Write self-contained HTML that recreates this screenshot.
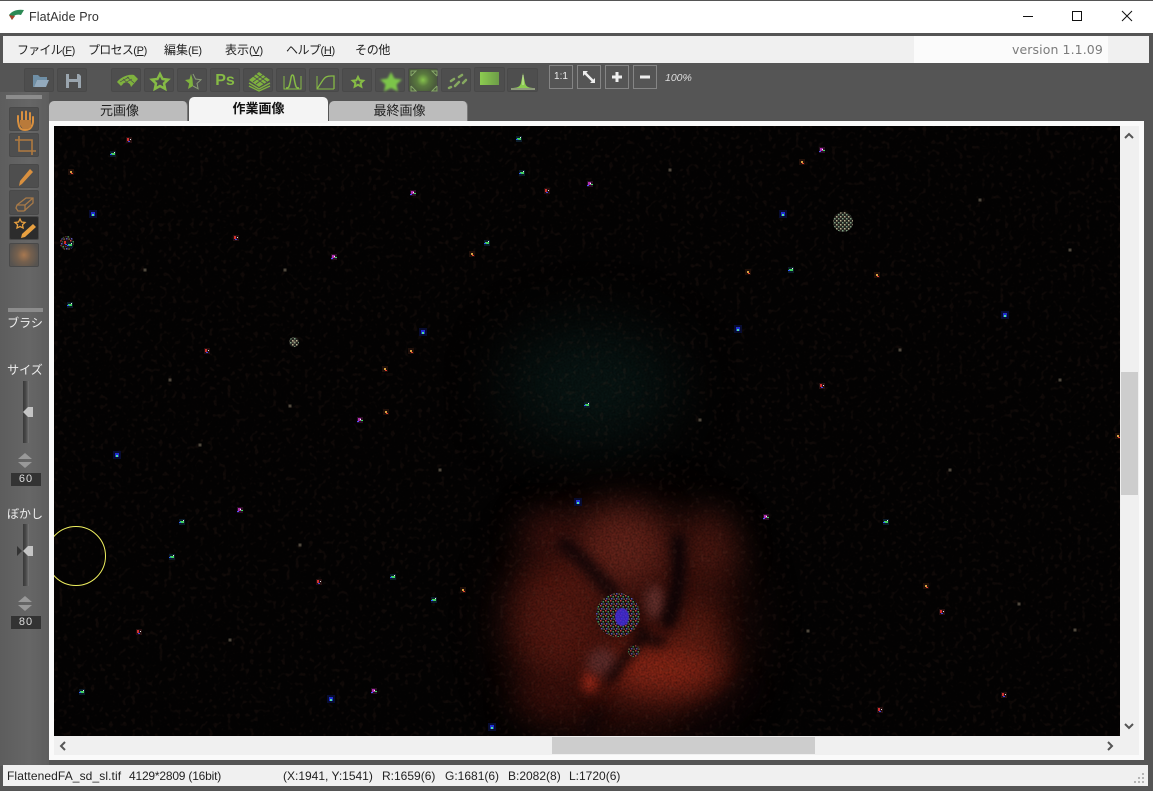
<!DOCTYPE html>
<html><head><meta charset="utf-8"><title>FlatAide Pro</title>
<style>
html,body{margin:0;padding:0;background:#555;}
body{width:1153px;height:791px;position:relative;overflow:hidden;font-family:"Liberation Sans","Noto Sans CJK JP",sans-serif;font-size:12px;color:#222}
.a{position:absolute;white-space:nowrap}
.b{position:absolute;width:30px;height:24px;background:#4e4e4e;border:1px solid #494949;box-sizing:border-box;border-radius:2px}
.b svg,.c svg{position:absolute;left:0;top:0}
.c{position:absolute;top:65px;width:24px;height:24px;border:1px solid #858585;box-sizing:border-box;color:#eee;font-size:10px;text-align:center;line-height:22px}
.m{position:absolute;top:42px;font-size:12px;line-height:16px;color:#222;white-space:nowrap}
.m span{font-size:11px;letter-spacing:-.3px}
.tab{position:absolute;box-sizing:border-box;text-align:center;font-size:13px;border-radius:5px 5px 0 0}
.v{position:absolute;left:11px;width:30px;height:13px;background:#333;color:#ddd;text-align:center;font:11px/13px "Liberation Sans",sans-serif;letter-spacing:1px}
.l{position:absolute;left:0;width:50px;text-align:center;color:#eee;font-size:12px;line-height:14px}
.tr{position:absolute;left:23px;width:6px;background:linear-gradient(90deg,#383838,#4a4a4a 50%,#777);}
.s{position:absolute;left:9px;width:30px;height:30px}
.st{position:absolute;top:769px;font-size:12px;line-height:15px;color:#222;white-space:nowrap}
</style></head><body>
<div class="a" style="left:0;top:0;width:1153px;height:33px;background:#fff;border-top:1px solid #555;box-sizing:border-box"></div>
<svg class="a" style="left:8px;top:8px" width="18" height="14" viewBox="0 0 18 14"><path d="M1 7 C4 3 9 1 16 2 L13 7 C9 6 5 7 4 12 Z" fill="#2c8a55"/><path d="M1 7 L4 12 L7 8 Z" fill="#a5432c"/></svg>
<div class="a" style="left:29px;top:10px;font-size:12.5px;line-height:15px;color:#333;letter-spacing:.1px">FlatAide Pro</div>
<svg class="a" style="left:1020px;top:8px" width="125" height="17" viewBox="0 0 125 17" fill="none" stroke="#111" stroke-width="1"><path d="M3 8.5H13"/><rect x="52.5" y="3.5" width="9" height="9"/><path d="M102 3L112 13M112 3L102 13"/></svg>

<div class="a" style="left:3px;top:36px;width:1146px;height:27px;background:#f0f0f0"></div>
<div class="a" style="left:914px;top:36px;width:194px;height:27px;background:#fbfbfb"></div>
<div class="m" style="left:17px;letter-spacing:-.8px">ファイル<span>(<u>F</u>)</span></div>
<div class="m" style="left:88px;letter-spacing:-.7px">プロセス<span>(<u>P</u>)</span></div>
<div class="m" style="left:164px">編集<span>(E)</span></div>
<div class="m" style="left:225px">表示<span>(<u>V</u>)</span></div>
<div class="m" style="left:286px;letter-spacing:-.5px">ヘルプ<span>(<u>H</u>)</span></div>
<div class="m" style="left:355px;letter-spacing:-.3px">その他</div>
<div class="a" style="left:1012px;top:42px;font:12.5px/16px 'DejaVu Sans',sans-serif;color:#7b7b7b;letter-spacing:.1px">version 1.1.09</div>

<!-- left column -->
<div class="a" style="left:0;top:92px;width:49px;height:674px;background:linear-gradient(90deg,#5d5d5d,#666 60%,#5e5e5e)"></div>
<div class="a" style="left:6px;top:95px;width:36px;height:4px;background:#8c8c8c"></div>
<div class="a" style="left:8px;top:308px;width:35px;height:4px;background:#8c8c8c"></div>

<!-- toolbar -->
<div class="b" style="left:24px;top:68px"><svg width="30" height="24" viewBox="0 0 30 24"><path d="M8 18V6h5l2 2h7v3H12l-3 7z" fill="#6f8fa6"/><path d="M9 18l3-7h12l-3 7z" fill="#93aabd"/></svg></div>
<div class="b" style="left:57px;top:68px"><svg width="30" height="24" viewBox="0 0 30 24"><path d="M8 5h13l2 2v12H8z" fill="#9aa5ae"/><rect x="11" y="5" width="8" height="5" fill="#4e4e4e"/><rect x="11" y="13" width="9" height="6" fill="#4e4e4e"/></svg></div>
<div class="b" style="left:111px;top:68px"><svg width="30" height="24" viewBox="0 0 30 24"><path d="M5 13C9 8 16 5 22 6L26 10 19 18C18 13 13 12 9 17Z" fill="#7fb23e"/><path d="M11 10l7 6M15 8l7 6M8 13l9-5M11 15l9-5" stroke="#4e4e4e" stroke-width=".7"/></svg></div>
<div class="b" style="left:144px;top:68px"><svg width="30" height="24" viewBox="0 0 30 24"><path d="M15 5l2.500 5 5.500.7-4 3.700 1.100 5.400-5.100-2.800-5.100 2.800 1.100-5.400-4-3.700 5.500-.7z" fill="none" stroke="#86bb45" stroke-width="2.500"/></svg></div>
<div class="b" style="left:177px;top:68px"><svg width="30" height="24" viewBox="0 0 30 24"><path d="M13 5l1.500 5 .5 7-5 3 1.200-5.500L7 11l4.500-.8z" fill="#7fb23e"/><path d="M15 5l2.500 5 5.500.7-4 3.700 1.100 5.400-5.100-2.800" fill="none" stroke="#8a9a78" stroke-width="1"/></svg></div>
<div class="b" style="left:210px;top:68px"><div class="a" style="left:0;width:28px;text-align:center;top:2px;font:bold 16px/20px 'Liberation Sans',sans-serif;color:#86bb45">Ps</div></div>
<div class="b" style="left:243px;top:68px"><svg width="30" height="24" viewBox="0 0 30 24"><path d="M5 11L15 3l11 8-11 7z" fill="#7fb23e"/><path d="M5 14l10 6 11-6M5 17l10 5 11-5" fill="none" stroke="#7fb23e" stroke-width="1.400"/><path d="M9 7l11 8M12 5l11 8M20 5L9 13M23 7L12 15" stroke="#4e4e4e" stroke-width=".8"/></svg></div>
<div class="b" style="left:276px;top:68px"><svg width="30" height="24" viewBox="0 0 30 24" fill="none" stroke="#86bb45"><path d="M7 7v13h17V7" stroke-width="1"/><path d="M9 19c3 0 3-1 4-5s1-8 2.500-8 1.500 4 2.500 8 1 5 4 5" stroke-width="1.500"/></svg></div>
<div class="b" style="left:309px;top:68px"><svg width="30" height="24" viewBox="0 0 30 24" fill="none" stroke="#86bb45"><path d="M7 7v13h17" stroke-width="1"/><path d="M7 20l6-9c2-3 4-4 8-4h3v13" stroke-width="1.300"/></svg></div>
<div class="b" style="left:342px;top:68px"><svg width="30" height="24" viewBox="0 0 30 24"><path d="M15 8l1.600 3.300 3.600.4-2.600 2.400.7 3.500-3.300-1.800-3.300 1.800.7-3.500-2.600-2.400 3.600-.4z" fill="none" stroke="#86bb45" stroke-width="2"/></svg></div>
<div class="b" style="left:375px;top:68px"><svg width="30" height="24" viewBox="0 0 30 24"><defs><filter id="f1"><feGaussianBlur stdDeviation="1"/></filter></defs><path d="M15 3l3.500 6.500 7.500 1-5.500 5 1.500 7-7-3.500-7 3.500 1.500-7L4 10.500l7.500-1z" fill="#7cc44a" filter="url(#f1)"/></svg></div>
<div class="b" style="left:408px;top:68px;background:radial-gradient(circle,#86c24c 0,#5a7a3e 35%,#4a5a3c 75%)"><svg width="30" height="24" viewBox="0 0 30 24" fill="none" stroke="#86a868" stroke-width="1"><path d="M2 7V2h5l-5 5M28 7V2h-5l5 5M2 17v5h5l-5-5M28 17v5h-5l5-5"/></svg></div>
<div class="b" style="left:441px;top:68px"><svg width="30" height="24" viewBox="0 0 30 24" stroke="#86a860" stroke-width="2.500" stroke-linecap="round"><path d="M9 12l3-2M17 8l3-2M13 17l4-4M21 14l3-3M7 19l2-1"/></svg></div>
<div class="b" style="left:474px;top:67px;height:25px;width:31px"><div class="a" style="left:5px;top:4px;width:19px;height:13px;background:linear-gradient(90deg,#8ccc50,#6d9c48)"></div></div>
<div class="b" style="left:507px;top:68px;width:31px"><svg width="30" height="24" viewBox="0 0 30 24"><path d="M3 19c6 0 9-1 10-5l2-10 2 10c1 4 4 5 10 5z" fill="#8ccc50"/><path d="M15 6v10" stroke="#cfe8a8"/><path d="M3 20h24" stroke="#cfe8a8"/></svg></div>

<div class="c" style="left:549px">1:1</div>
<div class="c" style="left:577px"><svg width="22" height="22" viewBox="0 0 22 22"><path d="M6 6l10 10" stroke="#eee" stroke-width="2.500"/><path d="M5 5h5l-5 5zM17 17h-5l5-5z" fill="#eee"/></svg></div>
<div class="c" style="left:605px"><svg width="22" height="22" viewBox="0 0 22 22"><path d="M11 6v10M6 11h10" stroke="#eee" stroke-width="3"/></svg></div>
<div class="c" style="left:633px"><svg width="22" height="22" viewBox="0 0 22 22"><path d="M6 11h10" stroke="#eee" stroke-width="3"/></svg></div>
<div class="a" style="left:665px;top:72px;color:#ddd;font-size:10.500px;line-height:13px;font-style:italic">100%</div>

<!-- tools -->
<div class="b" style="left:9px;top:107px;height:24px"><svg width="30" height="24" viewBox="0 0 30 24"><path d="M8 13V8M12 12V4M16 12V3.500M20 12V5M23 14V9M8 13l1 5c1 3 3 4 6 4s7-1 8-8" fill="none" stroke="#d9903f" stroke-width="2" stroke-linecap="round"/><path d="M10 12h11v7l-3 2h-5l-3-4z" fill="#b97a3a"/></svg></div>
<div class="b" style="left:9px;top:133px;height:24px"><svg width="30" height="24" viewBox="0 0 30 24" fill="none" stroke="#b07a40" stroke-width="1.600"><path d="M5 6h17v15M9 2v15h17"/></svg></div>
<div class="b" style="left:9px;top:164px;height:24px"><svg width="30" height="24" viewBox="0 0 30 24"><path d="M9 21l1-5L20 4l3 3-11 12z" fill="#d9903f"/></svg></div>
<div class="b" style="left:9px;top:190px;height:25px"><svg width="30" height="24" viewBox="0 0 30 24" fill="none" stroke="#a87a48" stroke-width="1.300"><path d="M7 14l9-7h7v5l-9 8H8l-2-3z"/><path d="M7 14h8v6M15 14l8-7"/></svg></div>
<div class="b" style="left:9px;top:216px;height:24px;background:#2c2c2c"><svg width="30" height="24" viewBox="0 0 30 24"><path d="M10 2l1.500 3 3.500.5-2.500 2.300.6 3.200L10 9.500 7 11l.6-3.200L5 5.500 8.500 5z" fill="none" stroke="#e8a040" stroke-width="1.300"/><path d="M11 21l1-4L23 7l3 3-11 10z" fill="#e8a040"/></svg></div>
<div class="b" style="left:9px;top:243px;height:24px;background:radial-gradient(circle,#a87850 0,#75604e 40%,#57534f 85%)"></div>

<div class="l" style="top:316px">ブラシ</div>
<div class="l" style="top:363px">サイズ</div>
<div class="tr" style="top:381px;height:62px"></div>
<svg class="s" style="top:402px" viewBox="0 0 30 30"><path d="M14 10l5-5h5v10h-5z" fill="#c4c4c4"/></svg>
<svg class="s" style="top:449px" viewBox="0 0 30 30"><path d="M16 4l7 6H9zM9 13h14l-7 6z" fill="#999"/></svg>
<div class="v" style="top:473px">60</div>
<div class="l" style="top:507px">ぼかし</div>
<div class="tr" style="top:524px;height:62px"></div>
<svg class="s" style="top:541px" viewBox="0 0 30 30"><path d="M8 5l5 5-5 5z" fill="#333"/><path d="M14 10l5-5h5v10h-5z" fill="#c4c4c4"/></svg>
<svg class="s" style="top:592px" viewBox="0 0 30 30"><path d="M16 4l7 6H9zM9 13h14l-7 6z" fill="#999"/></svg>
<div class="v" style="top:616px">80</div>

<!-- tabs -->
<div class="tab" style="left:49px;top:101px;width:139px;height:20px;background:#bcbcbc;line-height:20px;border-right:1px solid #777;padding-left:3px">元画像</div>
<div class="tab" style="left:329px;top:101px;width:139px;height:20px;background:#bcbcbc;line-height:20px;border-right:1px solid #777;padding-left:3px">最終画像</div>
<div class="tab" style="left:189px;top:97px;width:139px;height:26px;background:#f4f4f4;line-height:23px;font-weight:bold;color:#111;z-index:2">作業画像</div>

<!-- panel -->
<div class="a" style="left:49px;top:121px;width:1095px;height:639px;background:#fafafa"></div>
<div class="a" style="left:54px;top:126px;width:1085px;height:629px;background:#f0f0f0"></div>
<div class="a" style="left:1121px;top:372px;width:17px;height:123px;background:#cdcdcd"></div>
<div class="a" style="left:552px;top:737px;width:263px;height:17px;background:#cdcdcd"></div>
<svg class="a" style="left:54px;top:126px;width:1085px;height:629px" viewBox="54 126 1085 629" fill="none" stroke="#555" stroke-width="2"><path d="M1125 138l4-4 4 4M1125 724l4 4 4-4M65 742l-4 4 4 4M1108 742l4 4-4 4"/></svg>

<!-- image -->
<svg class="a" style="left:54px;top:126px;width:1066px;height:610px;background:#040303" viewBox="54 126 1066 610">
<defs>
<filter id="b30" x="-80%" y="-80%" width="260%" height="260%" color-interpolation-filters="sRGB"><feGaussianBlur stdDeviation="28"/></filter>
<filter id="b14" x="-80%" y="-80%" width="260%" height="260%" color-interpolation-filters="sRGB"><feGaussianBlur stdDeviation="16"/></filter>
<filter id="b6" x="-60%" y="-60%" width="220%" height="220%" color-interpolation-filters="sRGB"><feGaussianBlur stdDeviation="5"/></filter>
<filter id="b1" x="-60%" y="-60%" width="220%" height="220%" color-interpolation-filters="sRGB"><feGaussianBlur stdDeviation=".6"/></filter>
<filter id="nz" x="0" y="0" width="100%" height="100%" color-interpolation-filters="sRGB"><feTurbulence type="fractalNoise" baseFrequency=".5" numOctaves="2" seed="4"/><feColorMatrix values="0 0 0 0 0  0 0 0 0 0  0 0 0 0 0  1.800 0 0 0 -.62"/></filter>
<filter id="fs" x="0" y="0" width="100%" height="100%" color-interpolation-filters="sRGB"><feTurbulence type="fractalNoise" baseFrequency=".22" numOctaves="1" seed="9"/><feColorMatrix values="0 0 0 0 .4  0 0 0 0 .25  0 0 0 0 .2  7 0 0 0 -4"/></filter>
<pattern id="dp" width="5" height="5" patternUnits="userSpaceOnUse"><rect width="5" height="5" fill="#1a0d10"/><rect x="0" y="0" width="1.500" height="1.500" fill="#c24a44"/><rect x="2.500" y="1" width="1.500" height="1.500" fill="#3f9a57"/><rect x="1" y="3" width="1.500" height="1.500" fill="#5858b8"/><rect x="3.500" y="3.500" width="1.200" height="1.200" fill="#a89a55"/></pattern>
<pattern id="dg" width="4" height="4" patternUnits="userSpaceOnUse"><rect width="4" height="4" fill="#242420"/><rect x="0" y="0" width="1.500" height="1.500" fill="#b8b090"/><rect x="2" y="2" width="1.500" height="1.500" fill="#7f9e80"/></pattern>
<g id="s1"><rect x="-3" y="-3" width="6" height="6" fill="#2a1024"/><rect x="-2" y="-2" width="3" height="3" fill="#b030b0"/><rect x="1" y="0" width="2" height="1" fill="#40e060"/><rect x="-3" y="1" width="2" height="1" fill="#5050ff"/><rect x="0" y="-1" width="1" height="1" fill="#fff"/></g>
<g id="s2"><rect x="-3" y="-3" width="6" height="6" fill="#0c1c2a"/><rect x="-2" y="-1" width="4" height="2" fill="#40d060"/><rect x="1" y="-2" width="1" height="1" fill="#e8e8e8"/><rect x="-3" y="0" width="2" height="1" fill="#3060ff"/></g>
<g id="s3"><rect x="-3" y="-3" width="6" height="6" fill="#20100a"/><rect x="-1" y="-1" width="2" height="2" fill="#d8a040"/><rect x="0" y="1" width="2" height="1" fill="#e04030"/></g>
<g id="s4"><rect x="-4" y="-4" width="8" height="8" fill="#080c30"/><rect x="-2" y="-2" width="4" height="4" fill="#2030d0"/><rect x="-1" y="0" width="2" height="2" fill="#50e0a0"/></g>
<g id="s5"><rect x="-1.500" y="-1.500" width="3" height="3" fill="#a89880" opacity=".45"/></g>
<g id="s6"><rect x="-3" y="-3" width="6" height="6" fill="#261010"/><rect x="-2" y="-2" width="2" height="3" fill="#d03030"/><rect x="1" y="-1" width="1" height="1" fill="#e0e0e0"/><rect x="-1" y="1" width="2" height="1" fill="#4040e0"/></g>
</defs>

<ellipse cx="590" cy="385" rx="85" ry="60" fill="#081513" filter="url(#b30)"/>
<!-- nebula -->
<ellipse cx="625" cy="625" rx="112" ry="112" fill="#340e0a" filter="url(#b30)"/>
<ellipse cx="560" cy="620" rx="45" ry="62" fill="#541810" filter="url(#b14)"/>
<ellipse cx="622" cy="548" rx="48" ry="40" fill="#622219" filter="url(#b14)"/>
<ellipse cx="550" cy="535" rx="26" ry="20" fill="#451410" filter="url(#b14)"/>
<ellipse cx="708" cy="550" rx="28" ry="38" fill="#4a1710" filter="url(#b14)"/>
<ellipse cx="665" cy="668" rx="62" ry="28" fill="#8a2616" filter="url(#b14)"/>
<ellipse cx="700" cy="628" rx="16" ry="26" fill="#6e2214" filter="url(#b14)"/>
<ellipse cx="550" cy="695" rx="32" ry="22" fill="#3c0f0a" filter="url(#b14)"/>
<ellipse cx="590" cy="682" rx="8" ry="11" fill="#9c2818" filter="url(#b6)"/>
<ellipse cx="602" cy="662" rx="15" ry="14" fill="#5e2c2a" filter="url(#b6)"/>
<ellipse cx="655" cy="602" rx="10" ry="17" fill="#64302c" filter="url(#b6)"/>
<g fill="none" stroke="#0e0406" stroke-linecap="round" filter="url(#b6)">
<path d="M565 545C585 560 595 575 612 592" stroke-width="16" opacity=".8"/>
<path d="M678 540C680 570 680 590 668 622" stroke-width="14"/>
<path d="M640 640C630 650 620 665 610 680" stroke-width="9"/>
<path d="M640 630C650 640 655 645 662 640" stroke-width="10" opacity=".9"/>
<path d="M600 715C590 720 585 730 590 736" stroke-width="16" opacity=".5"/>
<path d="M700 725C720 715 740 700 750 690" stroke-width="30" opacity=".3"/>
</g>
<rect x="54" y="126" width="1066" height="610" filter="url(#fs)" opacity=".14"/>
<rect x="54" y="126" width="1066" height="610" filter="url(#nz)" opacity=".4"/>

<circle cx="618" cy="615" r="22" fill="url(#dp)"/>
<ellipse cx="622" cy="617" rx="7" ry="9" fill="#4028d8" opacity=".85" filter="url(#b1)"/>
<circle cx="634" cy="651" r="6" fill="url(#dp)" opacity=".8"/>

<!-- big stars -->
<circle cx="843" cy="222" r="10" fill="url(#dg)"/>
<circle cx="67" cy="243" r="7" fill="url(#dp)"/><use href="#s6" x="66" y="243"/><use href="#s2" x="70" y="245"/>
<circle cx="294" cy="342" r="5" fill="url(#dg)"/><use href="#s5" x="294" y="342"/>
<use href="#s2" x="113" y="154"/><use href="#s6" x="129" y="140"/><use href="#s3" x="71" y="172"/><use href="#s4" x="93" y="214"/>
<use href="#s6" x="236" y="238"/><use href="#s2" x="519" y="139"/><use href="#s1" x="590" y="184"/><use href="#s1" x="413" y="193"/><use href="#s6" x="547" y="191"/>
<use href="#s3" x="802" y="162"/><use href="#s1" x="822" y="150"/><use href="#s2" x="522" y="173"/><use href="#s2" x="487" y="243"/><use href="#s3" x="472" y="254"/>
<use href="#s1" x="334" y="257"/><use href="#s5" x="285" y="270"/><use href="#s3" x="748" y="272"/><use href="#s3" x="877" y="275"/><use href="#s2" x="791" y="270"/>
<use href="#s4" x="783" y="214"/><use href="#s6" x="207" y="351"/><use href="#s4" x="423" y="332"/><use href="#s3" x="411" y="351"/><use href="#s3" x="385" y="369"/>
<use href="#s1" x="360" y="420"/><use href="#s3" x="386" y="412"/><use href="#s5" x="290" y="406"/><use href="#s2" x="587" y="405"/><use href="#s4" x="117" y="455"/>
<use href="#s4" x="578" y="502"/><use href="#s1" x="240" y="510"/><use href="#s2" x="182" y="522"/><use href="#s2" x="886" y="522"/><use href="#s2" x="434" y="600"/>
<use href="#s3" x="463" y="590"/><use href="#s6" x="139" y="632"/><use href="#s1" x="374" y="691"/><use href="#s4" x="331" y="699"/><use href="#s2" x="82" y="692"/>
<use href="#s4" x="492" y="727"/><use href="#s5" x="1019" y="604"/><use href="#s3" x="926" y="586"/><use href="#s6" x="942" y="612"/><use href="#s5" x="808" y="631"/>
<use href="#s4" x="1005" y="315"/><use href="#s3" x="1118" y="436"/><use href="#s6" x="822" y="386"/><use href="#s4" x="738" y="329"/><use href="#s6" x="1004" y="695"/>
<use href="#s6" x="880" y="710"/><use href="#s2" x="393" y="577"/><use href="#s6" x="319" y="582"/><use href="#s2" x="172" y="557"/><use href="#s2" x="70" y="305"/>
<use href="#s1" x="766" y="517"/><use href="#s5" x="300" y="545"/><use href="#s5" x="200" y="445"/><use href="#s5" x="700" y="420"/><use href="#s5" x="950" y="470"/>
<use href="#s5" x="1060" y="380"/><use href="#s5" x="980" y="200"/><use href="#s5" x="1070" y="250"/><use href="#s5" x="670" y="170"/><use href="#s5" x="440" y="470"/>
<use href="#s5" x="170" y="380"/><use href="#s5" x="1075" y="630"/><use href="#s5" x="230" y="640"/><use href="#s5" x="145" y="270"/><use href="#s5" x="900" y="350"/>

<circle cx="76" cy="556" r="29.500" fill="none" stroke="#f0f060" stroke-width="1"/>
</svg>

<!-- status -->
<div class="a" style="left:3px;top:765px;width:1145px;height:21px;background:#f0f0f0"></div>
<div class="st" style="left:7px;letter-spacing:.1px">FlattenedFA_sd_sl.tif</div>
<div class="st" style="left:129px;letter-spacing:-.2px">4129*2809 (16bit)</div>
<div class="st" style="left:283px">(X:1941, Y:1541)</div>
<div class="st" style="left:382px">R:1659(6)</div>
<div class="st" style="left:445px">G:1681(6)</div>
<div class="st" style="left:508px">B:2082(8)</div>
<div class="st" style="left:569px">L:1720(6)</div>
<svg class="a" style="left:1134px;top:772px" width="13" height="13" viewBox="0 0 13 13" fill="#b5b5b5"><rect x="8" y="1" width="2" height="2"/><rect x="4" y="5" width="2" height="2"/><rect x="8" y="5" width="2" height="2"/><rect x="0" y="9" width="2" height="2"/><rect x="4" y="9" width="2" height="2"/><rect x="8" y="9" width="2" height="2"/></svg>
</body></html>
